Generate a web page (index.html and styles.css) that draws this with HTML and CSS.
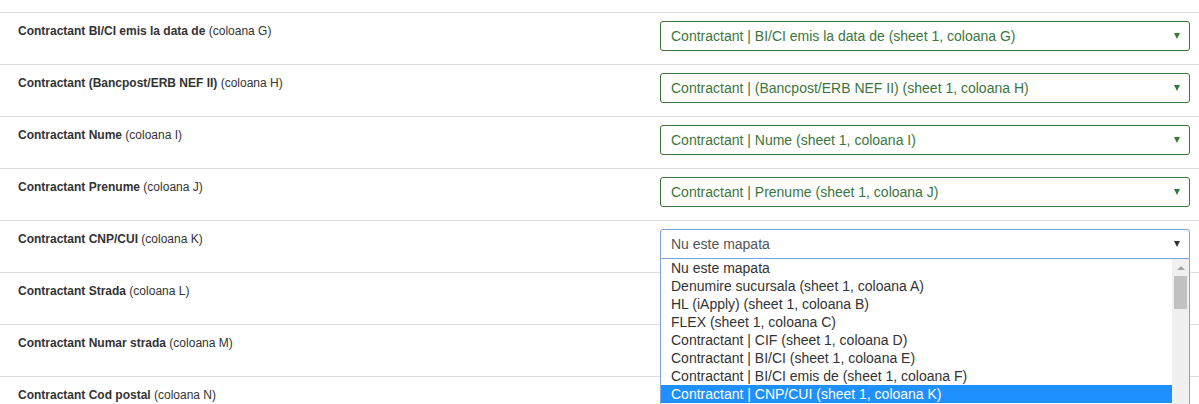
FILE: index.html
```html
<!DOCTYPE html>
<html lang="en">
<head>
    <meta charset="UTF-8">
    <title>Mapare coloane</title>
    <link rel="stylesheet" href="styles.css">
</head>
<body>
    <div class="mapping">
        <div class="map-row">
            <div class="map-label"><strong>Contractant BI/CI emis la data de</strong> (coloana G)</div>
            <div class="pick success">
                <span class="pick-text">Contractant | BI/CI emis la data de (sheet 1, coloana G)</span>
                <span class="caret"></span>
            </div>
        </div>
        <div class="map-row">
            <div class="map-label"><strong>Contractant (Bancpost/ERB NEF II)</strong> (coloana H)</div>
            <div class="pick success">
                <span class="pick-text">Contractant | (Bancpost/ERB NEF II) (sheet 1, coloana H)</span>
                <span class="caret"></span>
            </div>
        </div>
        <div class="map-row">
            <div class="map-label"><strong>Contractant Nume</strong> (coloana I)</div>
            <div class="pick success">
                <span class="pick-text">Contractant | Nume (sheet 1, coloana I)</span>
                <span class="caret"></span>
            </div>
        </div>
        <div class="map-row">
            <div class="map-label"><strong>Contractant Prenume</strong> (coloana J)</div>
            <div class="pick success">
                <span class="pick-text">Contractant | Prenume (sheet 1, coloana J)</span>
                <span class="caret"></span>
            </div>
        </div>
        <div class="map-row">
            <div class="map-label"><strong>Contractant CNP/CUI</strong> (coloana K)</div>
            <div class="pick open">
                <span class="pick-text">Nu este mapata</span>
                <span class="caret"></span>
                <div class="pick-menu">
                    <ul class="pick-options">
                        <li>Nu este mapata</li>
                        <li>Denumire sucursala (sheet 1, coloana A)</li>
                        <li>HL (iApply) (sheet 1, coloana B)</li>
                        <li>FLEX (sheet 1, coloana C)</li>
                        <li>Contractant | CIF (sheet 1, coloana D)</li>
                        <li>Contractant | BI/CI (sheet 1, coloana E)</li>
                        <li>Contractant | BI/CI emis de (sheet 1, coloana F)</li>
                        <li class="active">Contractant | CNP/CUI (sheet 1, coloana K)</li>
                    </ul>
                    <div class="scrollbar">
                        <span class="scroll-up"></span>
                        <span class="scroll-thumb"></span>
                    </div>
                </div>
            </div>
        </div>
        <!-- the selects below are hidden under the open list -->
        <div class="map-row">
            <div class="map-label"><strong>Contractant Strada</strong> (coloana L)</div>
            <div class="pick"></div>
        </div>
        <div class="map-row">
            <div class="map-label"><strong>Contractant Numar strada</strong> (coloana M)</div>
            <div class="pick"></div>
        </div>
        <div class="map-row">
            <div class="map-label"><strong>Contractant Cod postal</strong> (coloana N)</div>
            <div class="pick"></div>
        </div>
    </div>
</body>
</html>
```

FILE: styles.css
```css
html, body {
    margin: 0;
    padding: 0;
    background: #fff;
    overflow: hidden;
}

body {
    font-family: "Liberation Sans", Arial, sans-serif;
    color: #333;
}

.mapping {
    padding-top: 12px;
}

.map-row {
    display: grid;
    grid-template-columns: 1fr 530px;
    column-gap: 10px;
    padding: 8px 9px 13px 18px;
    border-top: 1px solid #ddd;
}

.map-label {
    font-size: 12px;
    line-height: 17px;
    padding-top: 2px;
    color: #333;
}

.map-label strong {
    font-weight: bold;
}

.pick {
    position: relative;
    display: flex;
    align-items: center;
    height: 30px;
    box-sizing: border-box;
    padding: 0 9px 0 10px;
    border: 1px solid #ccc;
    border-radius: 3px;
    font-size: 14px;
    color: #555;
    background: #fff;
}

.pick-text {
    flex: 1;
    white-space: nowrap;
}

.caret {
    width: 0;
    height: 0;
    border-left: 3px solid transparent;
    border-right: 3px solid transparent;
    border-top: 6px solid #444;
}

.pick.success {
    border-color: #3c763d;
    color: #3c763d;
}

.pick.success .caret {
    border-top-color: #3c763d;
}

.pick.open {
    border-color: #7da2e2;
    border-radius: 3px 3px 0 0;
}

.pick.open .caret {
    border-top-color: #333;
}

.pick-menu {
    position: absolute;
    top: 29px;
    left: -1px;
    right: -1px;
    height: 146px;
    display: flex;
    background: #fff;
    border: 1px solid #7da2e2;
    border-top: none;
    z-index: 5;
}

.pick-options {
    flex: 1;
    list-style: none;
    margin: 0;
    padding: 0;
}

.pick-options li {
    height: 18px;
    line-height: 18px;
    padding-left: 10px;
    font-size: 14px;
    color: #333;
    white-space: nowrap;
}

.pick-options li.active {
    background: #1e90ff;
    color: #fff;
}

.scrollbar {
    width: 17px;
    background: #f0f0f0;
    display: flex;
    flex-direction: column;
    align-items: center;
}

.scroll-up {
    width: 0;
    height: 0;
    margin-top: 7px;
    border-left: 4px solid transparent;
    border-right: 4px solid transparent;
    border-bottom: 4px solid #a3a3a3;
}

.scroll-thumb {
    width: 13px;
    height: 33px;
    margin-top: 6px;
    background: #c1c1c1;
}
```
